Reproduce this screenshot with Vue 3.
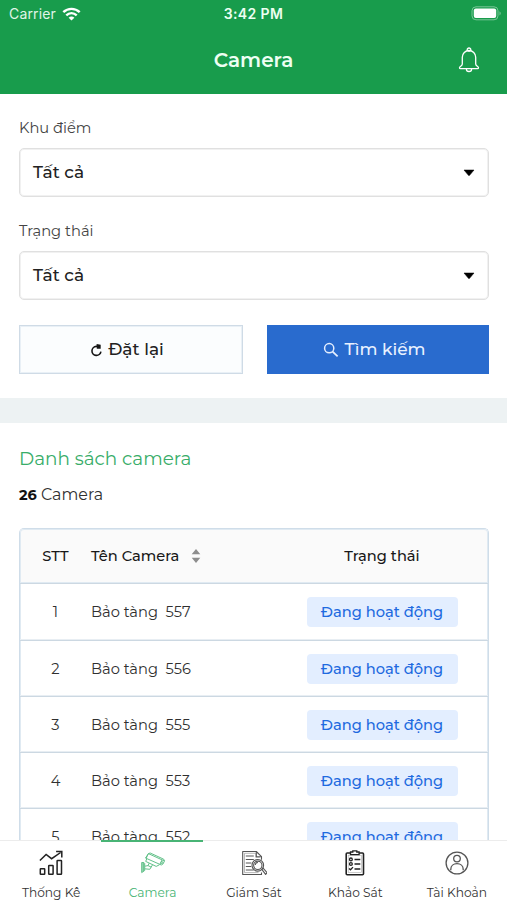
<script setup>
const filters = [
  { label: 'Khu điểm', value: 'Tất cả' },
  { label: 'Trạng thái', value: 'Tất cả' },
]
const cameras = [557, 556, 555, 553, 552].map((n, i) => ({ index: i + 1, name: `Bảo tàng  ${n}` }))
const tabs = [
  { id: 'stats', label: 'Thống Kê' },
  { id: 'camera', label: 'Camera' },
  { id: 'monitor', label: 'Giám Sát' },
  { id: 'survey', label: 'Khảo Sát' },
  { id: 'account', label: 'Tài Khoản' },
]
</script>

<template>
  <div class="screen">
    <header class="top">
      <div class="status">
        <div class="carrier">
          <span>Carrier</span>
          <svg class="wifi" width="19" height="14" viewBox="0 0 19 14" fill="none" stroke="#fff" stroke-width="2.4">
            <path d="M1.3 5.2C6 .7 13 .7 17.700 5.200" />
            <path d="M4.300 8.300c3-2.900 7.400-2.900 10.400 0" />
            <path d="M9.500 13.500 6.600 10.700c1.700-1.500 4.100-1.500 5.800 0z" fill="#fff" stroke="none" />
          </svg>
        </div>
        <span class="clock">3:42 PM</span>
        <div class="power">
          <svg width="31" height="15" viewBox="0 0 31 15">
            <rect x="1" y=".8" width="26" height="13" rx="4" fill="none" stroke="#79c797" stroke-width="1" />
            <rect x="2.800" y="2.600" width="22.400" height="9.400" rx="2" fill="#fff" />
            <path d="M28.500 5.200q2.500 2.100 0 4.200z" fill="#79c797" />
          </svg>
        </div>
      </div>
      <div class="titlebar">
        <h1>Camera</h1>
        <svg class="bell" width="22" height="26" viewBox="0 0 22 26" fill="none" stroke="#fff" stroke-width="1.300" stroke-linejoin="round">
          <path d="M9.200 3.600V2.800a1.800 1.800 0 0 1 3.600 0v.8" />
          <path d="M4.300 17V10.200a6.700 6.700 0 0 1 13.400 0V17c0 2 2.800 2.300 2.800 3.700 0 .7-.4 1-1 1h-17c-.6 0-1-.3-1-1 0-1.400 2.800-1.700 2.800-3.700z" />
          <path d="M8.400 21.900a2.600 2.600 0 0 0 5.200 0M9.700 4.200h2.600" />
        </svg>
      </div>
    </header>

    <main>
      <section class="filters">
        <div v-for="f in filters" :key="f.label" class="field">
          <label>{{ f.label }}</label>
          <div class="select">
            <span>{{ f.value }}</span>
            <svg width="12" height="8" viewBox="0 0 12 8"><path d="M1 1h10L6.600 6.300q-.6.7-1.200 0z" stroke="#000" stroke-width=".5" /></svg>
          </div>
        </div>
        <div class="actions">
          <button class="reset">
            <svg width="13" height="14" viewBox="0 0 13 14" fill="none" stroke="#151515" stroke-width="1.600">
              <path d="M8.500 3.400H6.300A4.500 4.500 0 1 0 10.900 8.600" />
              <path d="M6.600 1 10.700 1.700V5.800H6.800z" fill="#151515" stroke="none" />
            </svg>
            <span>Đặt lại</span>
          </button>
          <button class="search">
            <svg width="16" height="16" viewBox="0 0 16 16" fill="none" stroke="#e5efff" stroke-width="1.500">
              <circle cx="6.200" cy="6.200" r="4.600" /><path d="m9.600 9.600 5 4.800" stroke-width="1.800" />
            </svg>
            <span>Tìm kiếm</span>
          </button>
        </div>
      </section>

      <section class="list">
        <h2>Danh sách camera</h2>
        <p class="total"><b>26</b> Camera</p>
        <div class="table">
          <div class="row head">
            <span class="num">STT</span>
            <span class="name">
              <span>Tên Camera</span>
              <svg width="10" height="16" viewBox="0 0 10 16" fill="#8d8d8d"><path d="M5 1 9.300 6.200H.7zM5 15 9.300 9.800H.7z" /></svg>
            </span>
            <span class="st">Trạng thái</span>
          </div>
          <div v-for="c in cameras" :key="c.index" class="row">
            <span class="num">{{ c.index }}</span>
            <span class="name">{{ c.name }}</span>
            <span class="st"><span class="badge">Đang hoạt động</span></span>
          </div>
        </div>
      </section>
    </main>

    <nav>
      <div v-for="t in tabs" :key="t.id" class="tab" :class="[t.id, { active: t.id === 'camera' }]">
        <svg v-if="t.id === 'stats'" width="26" height="26" viewBox="0 0 26 26" fill="none" stroke="#222" stroke-width="1.500">
          <rect x="2.300" y="18.800" width="4.400" height="5.400" rx=".5" />
          <rect x="10.700" y="15.500" width="4.400" height="8.700" rx=".5" />
          <rect x="19.100" y="10.400" width="4.400" height="13.800" rx=".5" />
          <path d="m1.900 10.500 6.200-6 5.500 4.200 9-6.200" />
          <path d="M18.100 1.600h5.700v5.800" />
        </svg>
        <svg v-else-if="t.id === 'camera'" width="26" height="26" viewBox="0 0 26 26" fill="none" stroke="#63c18a" stroke-width="1" stroke-linejoin="round">
          <path d="M8.400 3.600 10.200 3l13.500 6.200.8 1.600-1.400 3.100-1.800 1.100L5.500 8z" />
          <path d="M8.400 3.600 6.200 8.300M8.400 3.600l13.700 6.300 2.400.9M22.100 9.900l-2.300 4.700" />
          <path d="m6.700 9-1 2.400 10.500 5 3.200-1.600" />
          <circle cx="21.800" cy="12.500" r="1" />
          <path d="m9.200 13.200-1.200 2.400 3.200 1.500 1.300-2.300M11.200 17l-1.400 2.300-5.200-.5M8 15.600l-3.200.6" />
          <path d="M1.700 12.500h2.100l.9 1v7l-3 2.100zM3.300 12.700v8.700" fill="#a6dfbe" />
        </svg>
        <svg v-else-if="t.id === 'monitor'" width="26" height="26" viewBox="0 0 26 26" fill="none" stroke="#555" stroke-width="1.100" stroke-linejoin="round">
          <path d="M20.500 22.500v2H1.700V1.500h13.600l5.200 5.200v3" />
          <path d="M3.500 3.300h11.300v4h4M3.500 3.300V22.600h14" stroke="#999" stroke-width=".7" />
          <path d="M15.300 1.500v5.200h5.200M4.800 6h8M4.800 9.500h8M4.800 13h5.500M4.800 16.500h5.500M4.800 20h8" />
          <circle cx="16.800" cy="15.300" r="5.800" fill="#fff" />
          <circle cx="16.800" cy="15.300" r="4.200" />
          <path d="M14.300 15a2.600 2.600 0 0 1 2.600-2.600M20.800 19.400l1.300-1.200 4 4.500-1.500 1.700z" />
        </svg>
        <svg v-else-if="t.id === 'survey'" width="22" height="26" viewBox="0 0 22 26" fill="none" stroke="#222" stroke-width="1.300">
          <rect x="2.200" y="3" width="17.300" height="21.800" rx="1" stroke-width="1.600" />
          <rect x="4.200" y="5.200" width="13.300" height="17.300" stroke="#aaa" stroke-width=".6" />
          <path d="M6.500 4.600V2h2.300V.8h4V2h2.300v2.600z" fill="#fff" />
          <path d="M10.500 9.500h5.800M10.500 14h5.800M10.500 19h5.800" stroke-width="1.500" />
          <circle cx="6.900" cy="9.400" r="1.400" /><circle cx="6.900" cy="14" r="1.400" />
          <path d="m5 18.500 1.500 1.300L9 17.100" />
        </svg>
        <svg v-else width="26" height="26" viewBox="0 0 26 26" fill="none" stroke="#555" stroke-width="1.300">
          <circle cx="13" cy="13" r="10.900" />
          <circle cx="13" cy="8.600" r="3.300" />
          <path d="M6.800 20.200v-1c0-3.300 2.700-5.500 6.200-5.500s6.200 2.200 6.200 5.500v1" />
        </svg>
        <span>{{ t.label }}</span>
      </div>
    </nav>
  </div>
</template>

<style>
body { background: #fff; }
</style>

<style scoped>
* { box-sizing: border-box; }
.screen {
  height: 900px; width: 507px; overflow: hidden;
  display: flex; flex-direction: column;
  font-family: Montserrat, Inter, "Liberation Sans", sans-serif;
  color: #303030; background: #fff;
}
svg { display: block; flex: none; }
h1, h2, p { margin: 0; }
.top { height: 94px; flex: none; background: #189c4c; color: #fff; }
.status { height: 28px; padding: 0 5px 0 9px; display: grid; grid-template-columns: 1fr auto 1fr; align-items: center; }
.carrier { display: flex; gap: 6px; align-items: center; font: 400 14px Inter, sans-serif; letter-spacing: .15px; color: #e0f5e8; margin-top: -1px; }
.clock { font: 600 14px Inter, sans-serif; letter-spacing: .4px; color: #ecfff2; margin: -1px 4px 0 0; }
.power { display: flex; justify-content: flex-end; margin-top: -1px; }
.titlebar { display: grid; grid-template-columns: 1fr auto 1fr; align-items: center; height: 64px; padding: 0 27px; }
h1 { grid-column: 2; font-size: 20px; font-weight: 600; line-height: 24px; color: #edfff3; }
.bell { justify-self: end; }
main { flex: 1; min-height: 0; overflow: hidden; }
.filters { height: 304px; padding: 22px 18px 0 19px; }
.field { height: 103px; }
label { display: block; font-size: 14.700px; line-height: 24px; color: #444; }
.select {
  margin-top: 8px; height: 49px; border: 1px solid #e0e0e0; border-radius: 5px;
  box-shadow: inset 0 0 0 1px #f1f1f1;
  padding: 0 13px; display: flex; align-items: center; justify-content: space-between;
  font-size: 17px; font-weight: 500; color: #222; line-height: 24px;
}
.select span { margin-top: -1px; }
.actions { display: grid; grid-template-columns: 224px 222px; justify-content: space-between; padding-top: 3px; }
button {
  height: 49px; padding: 0; border: 0; display: flex; align-items: center; justify-content: center;
  font-family: inherit; font-size: 17px; font-weight: 500; line-height: 24px;
}
button span { margin-top: -2px; }
.reset { gap: 5px; background: #fbfdfe; border: 1px solid #cfdbe6; box-shadow: inset 0 0 0 1px #e9f0f6; color: #222; padding-right: 8px; }
.search { gap: 5px; background: #296bce; color: #e8f1ff; padding-right: 7px; }
.list { border-top: 25px solid #edf2f3; padding: 24px 18px 0 19px; }
h2 { font-size: 18.400px; font-weight: 400; line-height: 24px; color: #38ad69; }
.total { margin-top: 13px; font-size: 15.900px; line-height: 22px; }
.total b { font-weight: 700; font-size: 14.500px; color: #111; }
.table { margin-top: 22px; border: 1px solid #cfdde9; border-bottom: 0; border-radius: 5px 5px 0 0; box-shadow: inset 0 0 0 1px #e0eaf2; }
.row { display: grid; grid-template-columns: 71px 1fr 212px; align-items: center; height: 56.200px; padding-top: 1px; border-bottom: 1px solid #ccd8e2; box-shadow: inset 0 -1px #e8eef3; font-size: 14.650px; line-height: 24px; }
.head { height: 55.400px; padding-top: 0; background: #fafafa; box-shadow: inset 0 0 0 1px #e0eaf2; font-weight: 500; color: #181818; border-radius: 4px 4px 0 0; }
.num { text-align: center; }
.name { white-space: pre; display: flex; gap: 13px; align-items: center; }
.name svg { margin-left: -1px; }
.st { display: flex; justify-content: center; }
.badge { width: 151px; height: 30px; border-radius: 4px; background: #e3eeff; color: #1e6ae0; font-weight: 500; text-align: center; line-height: 30px; }
nav { height: 60px; flex: none; display: grid; grid-template-columns: repeat(5, 1fr); background: #fff; border-top: 1px solid #ececec; }
.tab { display: flex; flex-direction: column; align-items: center; padding: 9px 0 0 1px; font-size: 12.200px; line-height: 18px; color: #333; }
.tab span { margin-top: 8px; white-space: nowrap; }
.tab.active { margin-top: -1px; border-top: 2px solid #48b475; padding-top: 8px; color: #48b475; }
</style>
